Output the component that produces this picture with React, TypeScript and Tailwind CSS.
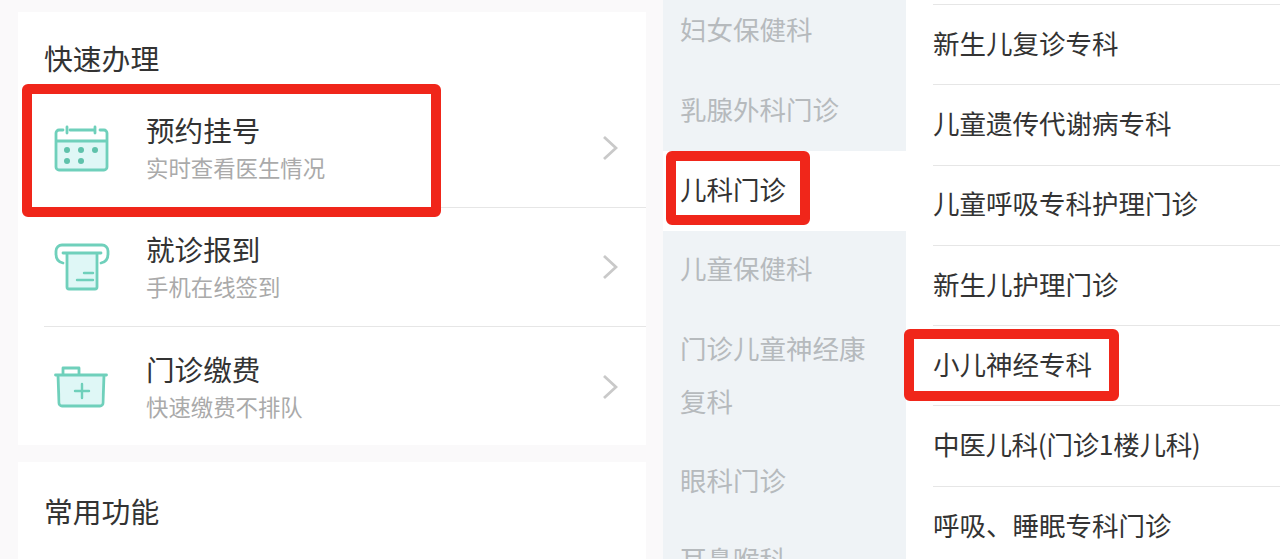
const cjk = "font-['Noto_Sans_CJK_SC','Noto_Sans',sans-serif]";

function CalendarIcon() {
  return (
    <svg width="55" height="47" viewBox="0 0 55 47" fill="none">
      <path d="M2 17h51v25a3 3 0 0 1-3 3H5a3 3 0 0 1-3-3z" fill="#dff7f6" />
      <path d="M9 5H5a3 3 0 0 0-3 3v34a3 3 0 0 0 3 3h45a3 3 0 0 0 3-3V8a3 3 0 0 0-3-3h-4M16 5h24M2 16h51" stroke="#6fd0bb" strokeWidth="2.8" strokeLinecap="round" />
      <path d="M13 2v6M41 2v6" stroke="#6fd0bb" strokeWidth="2.8" strokeLinecap="round" />
      <g fill="#5fc2ab">
        <circle cx="13" cy="25" r="3" />
        <circle cx="27" cy="25" r="3" />
        <circle cx="41" cy="25" r="3" />
        <circle cx="13" cy="36" r="3" />
        <circle cx="27" cy="36" r="3" />
      </g>
    </svg>
  );
}

function TicketIcon() {
  return (
    <svg width="56" height="48" viewBox="0 0 56 48" fill="none">
      <path d="M12 10h32v34a2 2 0 0 1-2 2H14a2 2 0 0 1-2-2z" fill="#dff7f6" />
      <path d="M9 20C4 19 2 16 2 11V8a6 6 0 0 1 6-6h40a6 6 0 0 1 6 6v3c0 5-2 8-7 9" stroke="#6fd0bb" strokeWidth="2.8" strokeLinecap="round" />
      <path d="M9 10h38M13 10v34a2 2 0 0 0 2 2h26a2 2 0 0 0 2-2V10" stroke="#6fd0bb" strokeWidth="2.8" strokeLinecap="round" />
      <path d="M30 30h9M23 37h16" stroke="#6fd0bb" strokeWidth="2.4" strokeLinecap="round" />
    </svg>
  );
}

function BoxIcon() {
  return (
    <svg width="54" height="42" viewBox="0 0 54 42" fill="none">
      <path d="M4 9h46l-3 28a3 3 0 0 1-3 3H10a3 3 0 0 1-3-3z" fill="#dff7f6" />
      <path d="M1.500 9h51M4 9l1 28a3 3 0 0 0 3 3h38a3 3 0 0 0 3-3l1-28M9 8V2h16v6" stroke="#6fd0bb" strokeWidth="2.8" strokeLinecap="round" strokeLinejoin="round" />
      <path d="M28 18v14M21 25h14" stroke="#6fd0bb" strokeWidth="2.4" strokeLinecap="round" />
    </svg>
  );
}

function Chevron() {
  return (
    <svg width="16" height="26" viewBox="0 0 16 26" fill="none">
      <path d="M2 2l12 11L2 24" stroke="#c9c9c9" strokeWidth="2.8" />
    </svg>
  );
}

const quick = [
  { title: "预约挂号", sub: "实时查看医生情况", icon: <CalendarIcon /> },
  { title: "就诊报到", sub: "手机在线签到", icon: <TicketIcon /> },
  { title: "门诊缴费", sub: "快速缴费不排队", icon: <BoxIcon /> },
];

const doctors = [
  "新生儿复诊专科",
  "儿童遗传代谢病专科",
  "儿童呼吸专科护理门诊",
  "新生儿护理门诊",
  "小儿神经专科",
  "中医儿科(门诊1楼儿科)",
  "呼吸、睡眠专科门诊",
];

export default function App() {
  return (
    <div className={`relative flex h-[559px] w-[1280px] overflow-hidden bg-[#faf9fa] ${cjk}`}>
      <div className="ml-[18px] flex w-[628px] flex-col gap-[17px] pt-3">
        <div className="h-[433px] bg-white">
          <div className="flex h-[77px] items-center pl-[26px] pt-[16px] text-[28.8px] leading-none text-[#333]">快速办理</div>
          <div className="pl-[26px]">
            {quick.map((q, i) => (
              <div key={q.title} className={`flex h-[119px] items-center ${i < 2 ? "border-b border-[#e6e6e6]" : ""}`}>
                <div className="flex w-[102px] justify-start pl-[10px]">{q.icon}</div>
                <div className="flex-1 pb-[2px]">
                  <div className="text-[28.6px] leading-[38px] text-[#333]">{q.title}</div>
                  <div className="mt-[2px] text-[22.4px] leading-[32px] text-[#aaa]">{q.sub}</div>
                </div>
                <div className="pr-[28px]"><Chevron /></div>
              </div>
            ))}
          </div>
        </div>
        <div className="flex h-[100px] items-start bg-white pl-[26px] pt-[32px] text-[28.8px] leading-[34px] text-[#333]">常用功能</div>
      </div>

      <div className="ml-[17px] -mt-[9px] h-[620px] w-[243px] shrink-0 bg-[#eff3f6] text-[26.5px] text-[#b6babd]">
        <div className="flex h-[80px] items-center pb-[4px] pl-[17px]">妇女保健科</div>
        <div className="flex h-[80px] items-center pb-[4px] pl-[17px]">乳腺外科门诊</div>
        <div className="flex h-[80px] items-center bg-white pb-[4px] pl-[17px] text-[#333]">儿科门诊</div>
        <div className="flex h-[80px] items-center pb-[6px] pl-[17px]">儿童保健科</div>
        <div className="px-[17px] pb-[12px] pt-[10px] leading-[53px]">门诊儿童神经康复科</div>
        <div className="flex h-[80px] items-center pt-[2px] pl-[17px]">眼科门诊</div>
        <div className="flex h-[80px] items-center pl-[17px]">耳鼻喉科</div>
      </div>

      <div className="flex-1 bg-white pl-[27px] text-[26.5px] text-[#333]">
        <div className="border-b border-[#e6e6e6] pt-[4px]" />
        {doctors.map((d) => (
          <div key={d} className="flex h-[80.3px] items-center border-b border-[#e6e6e6] pb-[4px]">
            {d.includes("(") ? <span className="tracking-[-0.3px]">{d}</span> : d}
          </div>
        ))}
      </div>

      {/* red marker boxes drawn over the screenshot */}
      <div className="absolute left-[22px] top-[84px] h-[133px] w-[419px] rounded-[6px] border-[10px] border-[#f0261a]" />
      <div className="absolute left-[666px] top-[151px] h-[74px] w-[144px] rounded-[6px] border-[10px] border-[#f0261a]" />
      <div className="absolute left-[904px] top-[329px] h-[72px] w-[215px] rounded-[6px] border-[10px] border-[#f0261a]" />
    </div>
  );
}
